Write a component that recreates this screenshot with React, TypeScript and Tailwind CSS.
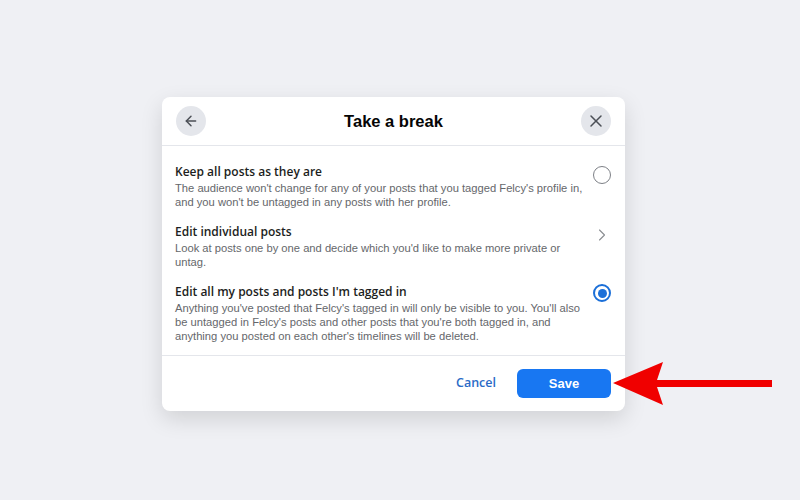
import { ArrowLeft, X, ChevronRight } from "lucide-react";

const options = [
  {
    title: "Keep all posts as they are",
    desc: "The audience won't change for any of your posts that you tagged Felcy's profile in, and you won't be untagged in any posts with her profile.",
    kind: "radio",
  },
  {
    title: "Edit individual posts",
    desc: "Look at posts one by one and decide which you'd like to make more private or untag.",
    kind: "chevron",
  },
  {
    title: "Edit all my posts and posts I'm tagged in",
    desc: "Anything you've posted that Felcy's tagged in will only be visible to you. You'll also be untagged in Felcy's posts and other posts that you're both tagged in, and anything you posted on each other's timelines will be deleted.",
    kind: "selected",
  },
];

function Control({ kind }: { kind: string }) {
  if (kind === "chevron") {
    return <ChevronRight size={20} strokeWidth={1.3} className="text-[#8a8d91] mt-[2px]" />;
  }
  if (kind === "selected") {
    return (
      <div className="w-[18px] h-[18px] rounded-full border-2 border-[#1b6fd8] flex items-center justify-center mt-[1px]">
        <div className="w-[9px] h-[9px] rounded-full bg-[#1b6fd8]" />
      </div>
    );
  }
  return <div className="w-[18px] h-[18px] rounded-full border border-[#7d8086] mt-[3px]" />;
}

export default function App() {
  return (
    <div
      className="relative w-[800px] h-[500px] bg-[#eff0f4] pl-[162px] pt-[97px]"
      style={{ fontFamily: '"Liberation Sans", Arial, sans-serif' }}
    >
      {/* Dialog */}
      <div className="w-[463px] bg-white rounded-lg shadow-[0_8px_22px_rgba(0,0,0,0.13)]">
        <div className="h-[49px] flex items-center justify-between px-[14px] border-b border-[#e4e6eb]">
          <div className="w-[30px] h-[30px] rounded-full bg-[#e4e6eb] flex items-center justify-center">
            <ArrowLeft size={16} strokeWidth={2.2} className="text-[#4b4f56]" />
          </div>
          <h1 className="text-[16.5px] font-bold text-[#050505] pt-px">Take a break</h1>
          <div className="w-[30px] h-[30px] rounded-full bg-[#e4e6eb] flex items-center justify-center">
            <X size={20} strokeWidth={1.8} className="text-[#4b4f56]" />
          </div>
        </div>

        <div className="pt-[17px] pb-[12px] pl-[13px] pr-[13px] flex flex-col gap-[14px] border-b border-[#e4e6eb]">
          {options.map((o) => (
            <div key={o.title} className="flex justify-between">
              <div className="w-[414px]">
                <div className="text-[12px] leading-[18px] font-semibold text-[#1c1e21] font-['Open_Sans',sans-serif]">
                  {o.title}
                </div>
                <div className="text-[11.2px] leading-[14px] text-[#65676b]">{o.desc}</div>
              </div>
              <div className="w-[20px] flex justify-center">
                <Control kind={o.kind} />
              </div>
            </div>
          ))}
        </div>

        <div className="h-[55px] flex items-center justify-end gap-[9px] pr-[14px]">
          <button className="px-3 h-[29px] text-[12.5px] font-semibold text-[#2a6bc7] font-['Open_Sans',sans-serif]">
            Cancel
          </button>
          <button className="w-[94px] h-[29px] rounded-md bg-[#1877f2] text-white text-[13px] font-bold">
            Save
          </button>
        </div>
      </div>

      {/* Annotation arrow */}
      <svg className="absolute left-0 top-0" width="800" height="500">
        <polygon
          points="613,383 663,362 657,380 772,380 772,387 657,387 663,405"
          fill="#f00000"
        />
      </svg>
    </div>
  );
}
